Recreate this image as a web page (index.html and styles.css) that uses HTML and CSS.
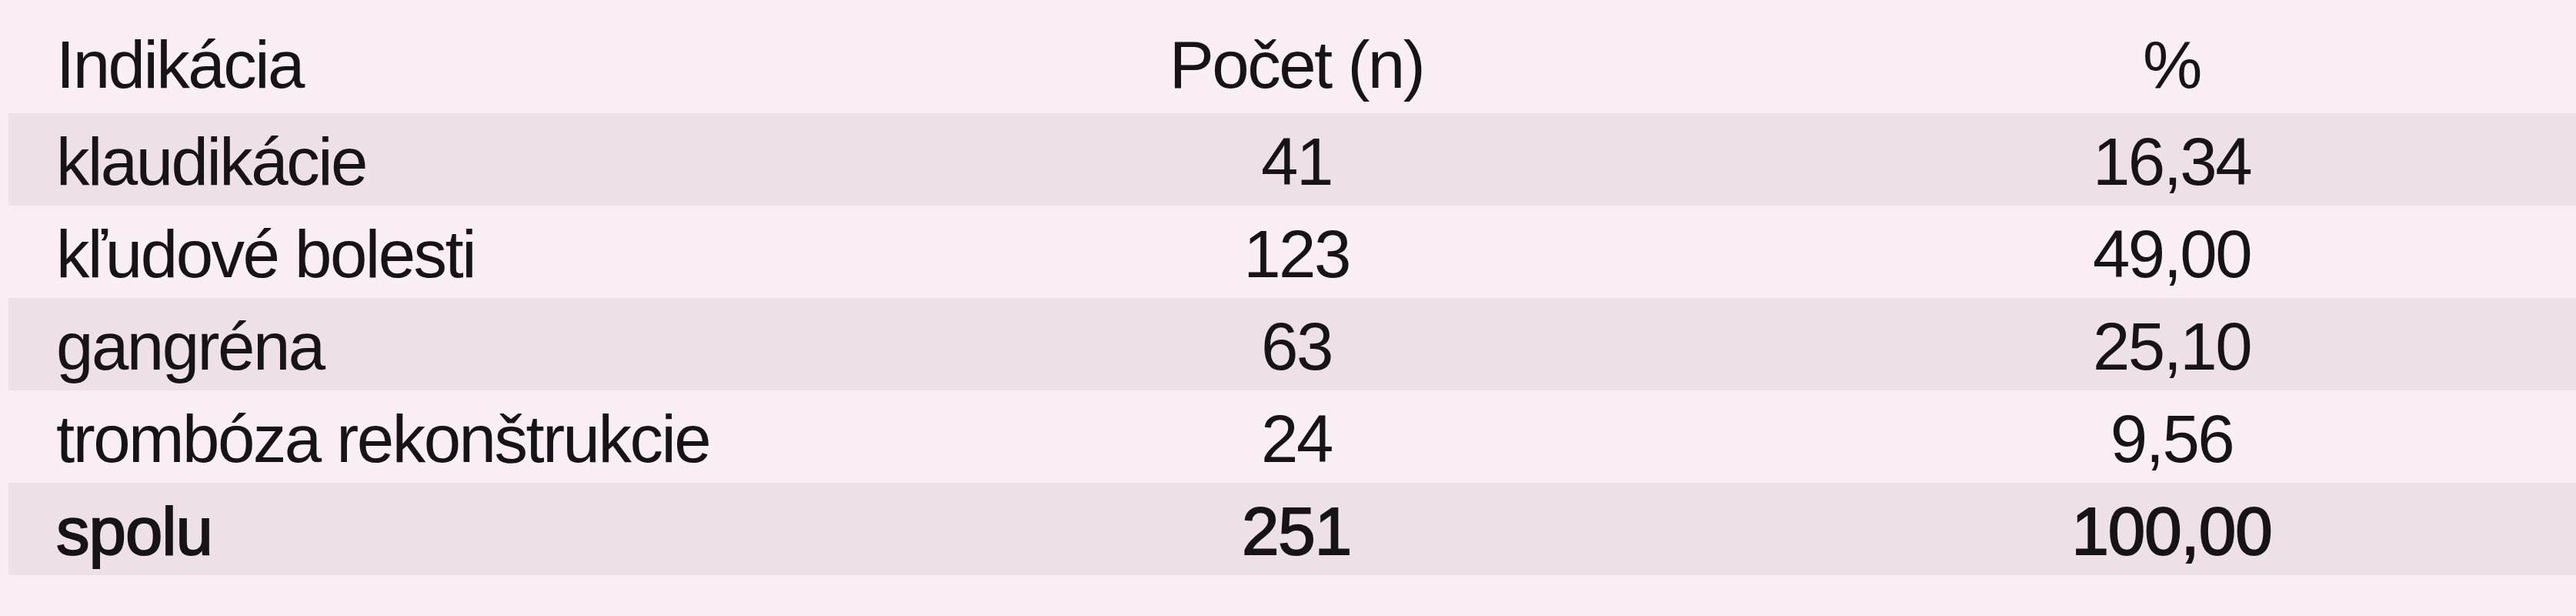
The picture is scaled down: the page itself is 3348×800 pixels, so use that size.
FILE: index.html
```html
<!DOCTYPE html>
<html lang="sk">
<head>
<meta charset="utf-8">
<title>Indikácia</title>
<link rel="stylesheet" href="styles.css">
</head>
<body>
<div class="table">
  <div class="row head">
    <div class="cell c1">Indikácia</div>
    <div class="cell c2">Počet (n)</div>
    <div class="cell c3">%</div>
  </div>
  <div class="row stripe">
    <div class="cell c1">klaudikácie</div>
    <div class="cell c2">41</div>
    <div class="cell c3">16,34</div>
  </div>
  <div class="row">
    <div class="cell c1">kľudové bolesti</div>
    <div class="cell c2">123</div>
    <div class="cell c3">49,00</div>
  </div>
  <div class="row stripe">
    <div class="cell c1">gangréna</div>
    <div class="cell c2">63</div>
    <div class="cell c3">25,10</div>
  </div>
  <div class="row">
    <div class="cell c1">trombóza rekonštrukcie</div>
    <div class="cell c2">24</div>
    <div class="cell c3">9,56</div>
  </div>
  <div class="row stripe total">
    <div class="cell c1">spolu</div>
    <div class="cell c2">251</div>
    <div class="cell c3">100,00</div>
  </div>
</div>
</body>
</html>
```

FILE: styles.css
```css
html, body {
  margin: 0;
  padding: 0;
  background: #f8eef3;
}
body {
  font-family: "Liberation Sans", Arial, sans-serif;
  font-size: 87px;
  letter-spacing: -2.5px;
  color: #161416;
  height: 800px;
  overflow: hidden;
}
.table {
  margin-left: 11px;
  display: flex;
  flex-direction: column;
}
.row {
  display: grid;
  grid-template-columns: 1050px 1248px 1039px;
  height: 120px;
  line-height: 114px;
  padding-top: 6px;
  box-sizing: border-box;
}
.row.head {
  height: 147px;
  padding-top: 27px;
}
.row.stripe {
  background: #ede0e6;
}
.cell {
  white-space: nowrap;
}
.c1 {
  padding-left: 62px;
}
.c2 {
  text-align: center;
}
.c3 {
  text-align: center;
  padding-right: 12px;
}
.row.total {
  -webkit-text-stroke: 2px currentColor;
  letter-spacing: -1px;
}
```
